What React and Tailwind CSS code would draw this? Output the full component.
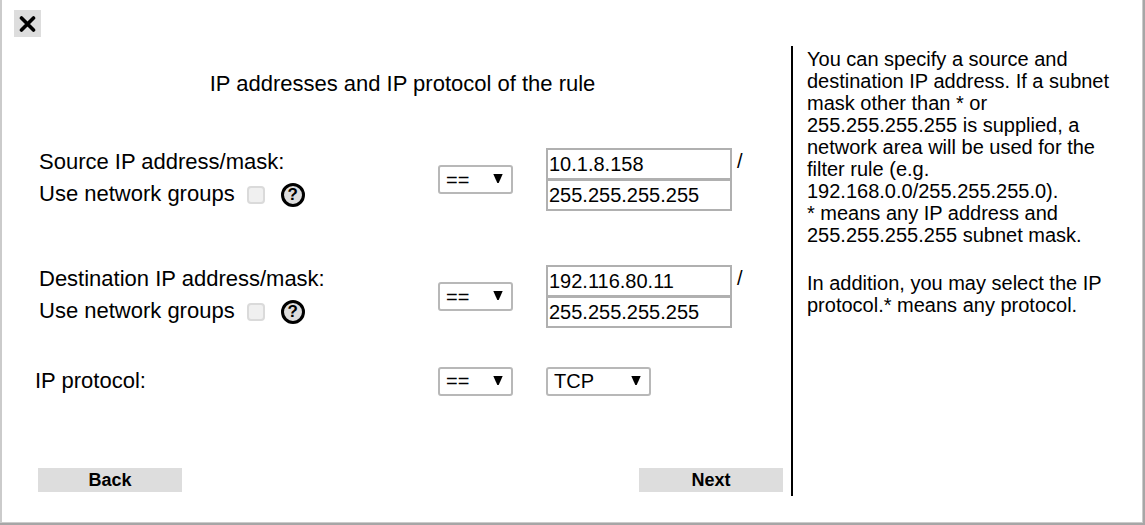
import React, { useState } from "react";

const operators = ["==", "!="];
const protocols = ["TCP", "UDP", "ICMP", "*"];

// Drop-down with the small black arrow on the right
const SelectBox = ({ id, label, value, options, onChange, className }) => {
  return (
    <div className={`relative ${className}`}>
      <select
        id={id}
        aria-label={label}
        value={value}
        onChange={(e) => onChange(e.target.value)}
        className="block w-full h-[29px] pl-[6px] appearance-none bg-white border-2 border-[#b8b8b8] rounded-[3px] text-[20px] leading-[24px] text-black"
      >
        {options.map((option) => (
          <option key={option} value={option}>
            {option}
          </option>
        ))}
      </select>
      <svg
        viewBox="0 0 10 9"
        className="absolute right-[10px] top-[9px] w-[10px] h-[9px] pointer-events-none"
      >
        <path d="M0.3 0H9.7L5.7 9H4.3Z" fill="#000" />
      </svg>
    </div>
  );
};

// One address + mask row (source or destination)
const AddressRow = ({ id, label, rule, onChange }) => {
  const inputClass =
    "block w-[186px] h-8 px-px bg-white border-2 border-[#b0b0b0] text-[20px] leading-[28px] text-black";

  return (
    <div className="grid grid-cols-[minmax(0,1fr)_108px_237px] items-start">
      <div className="pl-[5px] text-[22px] leading-8">
        <label htmlFor={`${id}-address`} className="block">
          {label}
        </label>
        <div className="flex items-center">
          <label htmlFor={`${id}-groups`}>Use network groups</label>
          <input
            id={`${id}-groups`}
            type="checkbox"
            checked={rule.groups}
            onChange={(e) => onChange({ ...rule, groups: e.target.checked })}
            className="ml-3 mt-[2px] w-[18px] h-[18px] appearance-none rounded-[4px] border-2 border-[#dadada] bg-[#f0f0f0] checked:bg-gray-500"
          />
          <button
            type="button"
            aria-label="Help"
            className="ml-4 mt-[2px] w-6 h-6 flex items-center justify-center rounded-full border-[3px] border-black bg-[#dddddd] text-[17px] leading-[18px] font-bold"
          >
            ?
          </button>
        </div>
      </div>

      <SelectBox
        label={`${label} operator`}
        value={rule.operator}
        options={operators}
        onChange={(operator) => onChange({ ...rule, operator })}
        className="w-[75px] mt-[2px] self-center"
      />

      <div className="pt-[2px]">
        <div className="flex">
          <input
            id={`${id}-address`}
            type="text"
            value={rule.address}
            onChange={(e) => onChange({ ...rule, address: e.target.value })}
            className={inputClass}
          />
          <span className="ml-[5px] text-[20px] leading-[26px]">/</span>
        </div>
        <input
          type="text"
          aria-label={`${label} mask`}
          value={rule.mask}
          onChange={(e) => onChange({ ...rule, mask: e.target.value })}
          className={`${inputClass} -mt-px`}
        />
      </div>
    </div>
  );
};

const App = () => {
  const [source, setSource] = useState({
    operator: "==",
    address: "10.1.8.158",
    mask: "255.255.255.255",
    groups: false,
  });
  const [destination, setDestination] = useState({
    operator: "==",
    address: "192.116.80.11",
    mask: "255.255.255.255",
    groups: false,
  });
  const [protocolOperator, setProtocolOperator] = useState("==");
  const [protocol, setProtocol] = useState("TCP");

  const buttonClass =
    "w-36 h-6 bg-[#dddddd] text-[18px] leading-6 font-bold text-center";

  return (
    <div className="min-h-screen flex pr-[2px] pb-[2px] bg-[#a6a6a6] text-black font-['Liberation_Sans',Arial,sans-serif]">
      <div className="flex-1 flex flex-col items-start pt-[10px] pb-[26px] pl-3 bg-white border-l-2 border-r border-b border-[#cbcbcb]">
        <button
          type="button"
          aria-label="Close"
          className="w-[27px] h-[27px] flex items-center justify-center bg-[#dddddd]"
        >
          <svg viewBox="0 0 17 17" className="w-[17px] h-[17px]">
            <path
              d="M2.5 3L14.5 15M14.5 3L2.5 15"
              stroke="#000"
              strokeWidth="3.6"
              strokeLinecap="round"
            />
          </svg>
        </button>

        <div className="w-full flex-1 flex mt-[9px]">
          {/* Left Side - Rule Form */}
          <form
            className="flex-1 flex flex-col"
            onSubmit={(e) => e.preventDefault()}
          >
            <h1 className="mt-6 text-center text-[22px] leading-7">
              IP addresses and IP protocol of the rule
            </h1>

            <div className="flex-1 flex flex-col pl-5 pr-2 pt-12 pb-1">
              <AddressRow
                id="source"
                label="Source IP address/mask:"
                rule={source}
                onChange={setSource}
              />
              <div className="mt-[52px]">
                <AddressRow
                  id="destination"
                  label="Destination IP address/mask:"
                  rule={destination}
                  onChange={setDestination}
                />
              </div>

              {/* IP Protocol */}
              <div className="mt-[37px] grid grid-cols-[minmax(0,1fr)_108px_237px] items-center">
                <label
                  htmlFor="protocol"
                  className="pl-px text-[22px] leading-8"
                >
                  IP protocol:
                </label>
                <SelectBox
                  label="IP protocol operator"
                  value={protocolOperator}
                  options={operators}
                  onChange={setProtocolOperator}
                  className="w-[75px]"
                />
                <SelectBox
                  id="protocol"
                  value={protocol}
                  options={protocols}
                  onChange={setProtocol}
                  className="w-[105px]"
                />
              </div>

              <div className="mt-auto pl-1 flex justify-between">
                <button type="button" className={buttonClass}>
                  Back
                </button>
                <button type="submit" className={buttonClass}>
                  Next
                </button>
              </div>
            </div>
          </form>

          {/* Right Side - Help Text */}
          <aside className="w-[351px] pl-[14px] pr-6 border-l-2 border-black text-[20px] leading-[22px]">
            <p className="mt-[2px]">
              You can specify a source and destination IP address. If a subnet
              mask other than * or 255.255.255.255 is supplied, a network area
              will be used for the filter rule (e.g.
              192.168.0.0/255.255.255.0).
              <br />* means any IP address and 255.255.255.255 subnet mask.
            </p>
            <p className="mt-[26px]">
              In addition, you may select the IP protocol.* means any protocol.
            </p>
          </aside>
        </div>
      </div>
    </div>
  );
};

export default App;
